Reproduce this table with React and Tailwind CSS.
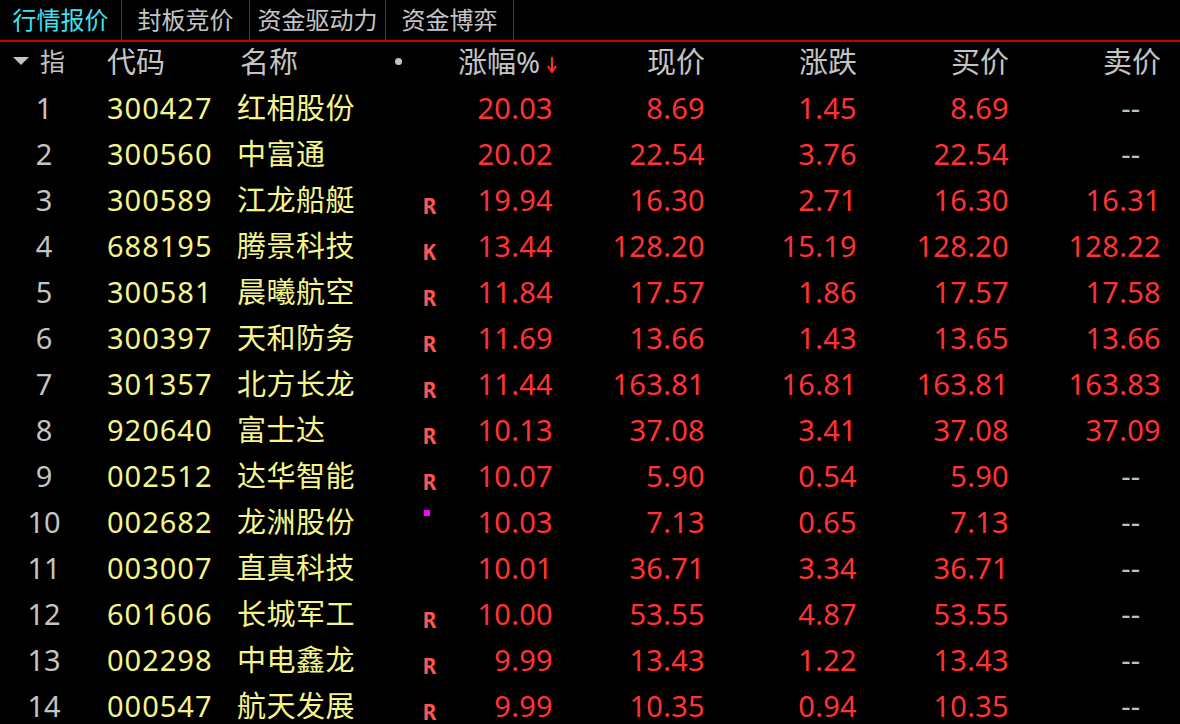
const rows = [
  ["1", "300427", "红相股份", "", "20.03", "8.69", "1.45", "8.69", "--"],
  ["2", "300560", "中富通", "", "20.02", "22.54", "3.76", "22.54", "--"],
  ["3", "300589", "江龙船艇", "R", "19.94", "16.30", "2.71", "16.30", "16.31"],
  ["4", "688195", "腾景科技", "K", "13.44", "128.20", "15.19", "128.20", "128.22"],
  ["5", "300581", "晨曦航空", "R", "11.84", "17.57", "1.86", "17.57", "17.58"],
  ["6", "300397", "天和防务", "R", "11.69", "13.66", "1.43", "13.65", "13.66"],
  ["7", "301357", "北方长龙", "R", "11.44", "163.81", "16.81", "163.81", "163.83"],
  ["8", "920640", "富士达", "R", "10.13", "37.08", "3.41", "37.08", "37.09"],
  ["9", "002512", "达华智能", "R", "10.07", "5.90", "0.54", "5.90", "--"],
  ["10", "002682", "龙洲股份", "dot", "10.03", "7.13", "0.65", "7.13", "--"],
  ["11", "003007", "直真科技", "", "10.01", "36.71", "3.34", "36.71", "--"],
  ["12", "601606", "长城军工", "R", "10.00", "53.55", "4.87", "53.55", "--"],
  ["13", "002298", "中电鑫龙", "R", "9.99", "13.43", "1.22", "13.43", "--"],
  ["14", "000547", "航天发展", "R", "9.99", "10.35", "0.94", "10.35", "--"],
];

const tabs = [
  { label: "行情报价", w: "w-[122px]", active: true },
  { label: "封板竞价", w: "w-[128px]" },
  { label: "资金驱动力", w: "w-[136px]" },
  { label: "资金博弈", w: "w-[128px]" },
];

const Price = ({ v }) =>
  v === "--" ? (
    <span className="text-[#c0c0c0] pr-[21px]">--</span>
  ) : (
    <span className="text-[#ff3333] tracking-[0.3px]">{v}</span>
  );

const Marker = ({ m }) => {
  if (m === "dot") {
    return <div className="ml-[30px] mt-[11px] w-[6px] h-[6px] bg-[#ff00ff]" />;
  }
  if (!m) return null;
  return (
    <div
      className="ml-[29px] mt-[19px] text-[#ff5555] text-[22px] font-bold leading-[22px]"
      style={{ fontFamily: '"DejaVu Sans Mono", monospace' }}
    >
      {m}
    </div>
  );
};

export default function App() {
  return (
    <div
      className="w-[1180px] h-[724px] overflow-hidden bg-black select-none"
      style={{ fontFamily: '"Noto Sans", "Noto Sans CJK SC", sans-serif' }}
    >
      {/* tab bar */}
      <div className="flex h-[42px] border-b-2 border-[#c80000]">
        {tabs.map((t) => (
          <div
            key={t.label}
            className={`${t.w} h-full flex items-center justify-center border-r border-[#c80000] text-[24px] ${
              t.active ? "text-[#3fe3f0]" : "text-[#c4c4c4]"
            }`}
          >
            {t.label}
          </div>
        ))}
      </div>

      {/* header */}
      <div className="flex h-[43px] items-center pb-[4px] text-[#c4c4c4] text-[29px] leading-none">
        <div className="w-[107px] flex items-center pl-[12px] gap-[10px]">
          <svg width="18" height="9" viewBox="0 0 18 9">
            <polygon points="1,0 17,0 9,8" fill="#c4c4c4" />
          </svg>
          <span className="text-[25px]">指</span>
        </div>
        <div className="w-[130px]">代码</div>
        <div className="w-[157px] pl-[3px]">名称</div>
        <div className="w-[59px] flex items-center">
          <span className="ml-[1px] w-[7px] h-[7px] rounded-full bg-[#c4c4c4]" />
        </div>
        <div className="w-[104px] flex items-center justify-end">
          <span>涨幅%</span>
          <svg width="10" height="16" viewBox="0 0 10 16" className="ml-[7px] mt-[6px]">
            <path d="M5 0 V14 M1 9 L5 15 L9 9" stroke="#ff2a2a" strokeWidth="2" fill="none" />
          </svg>
        </div>
        <div className="w-[148px] text-right">现价</div>
        <div className="w-[152px] text-right">涨跌</div>
        <div className="w-[152px] text-right">买价</div>
        <div className="w-[152px] text-right">卖价</div>
      </div>

      {/* rows */}
      {rows.map((r) => (
        <div key={r[0]} className="flex h-[46px] items-center text-[29px] leading-[46px]">
          <div className="w-[88px] text-center text-[#c4c4c4]">{r[0]}</div>
          <div className="w-[19px]" />
          <div className="w-[130px] text-[#f5f58a] tracking-[1px]">{r[1]}</div>
          <div className="w-[157px] text-[#f5f58a] tracking-[0.5px]">{r[2]}</div>
          <div className="w-[59px] self-stretch flex items-start">
            <Marker m={r[3]} />
          </div>
          <div className="w-[100px] text-right text-[#ff3333] tracking-[0.3px]">{r[4]}</div>
          <div className="w-[152px] text-right">
            <Price v={r[5]} />
          </div>
          <div className="w-[152px] text-right">
            <Price v={r[6]} />
          </div>
          <div className="w-[152px] text-right">
            <Price v={r[7]} />
          </div>
          <div className="w-[152px] text-right">
            <Price v={r[8]} />
          </div>
        </div>
      ))}
    </div>
  );
}
